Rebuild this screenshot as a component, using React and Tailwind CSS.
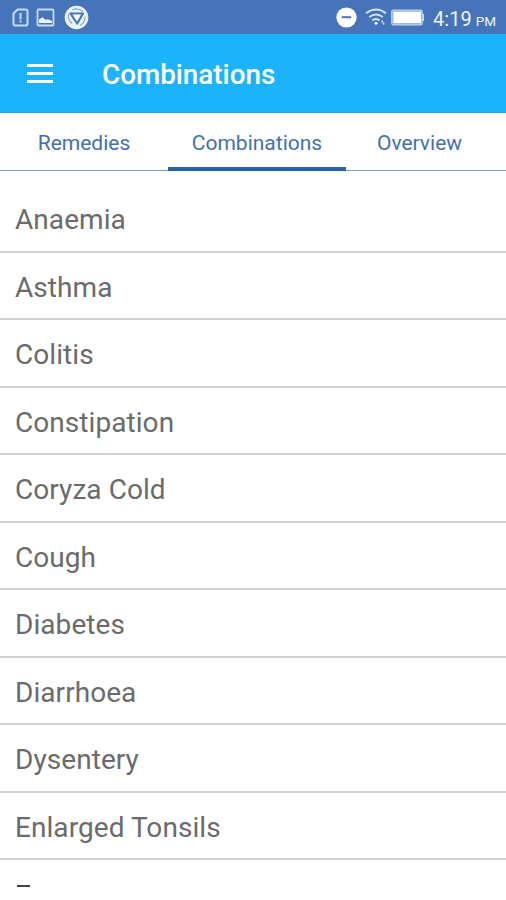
const conditions = [
  "Anaemia",
  "Asthma",
  "Colitis",
  "Constipation",
  "Coryza Cold",
  "Cough",
  "Diabetes",
  "Diarrhoea",
  "Dysentery",
  "Enlarged Tonsils",
];

function StatusBar() {
  return (
    <div className="flex h-[34px] items-center bg-[#4674ba] pl-3 pr-[10px] text-[#edf6fd]">
      <svg width="17" height="19" viewBox="0 0 17 19" fill="none" stroke="#c3dcf0" strokeWidth="2">
        <path d="M5.5 1.5h8.2q1.8 0 1.8 1.8v12.4q0 1.8-1.8 1.8H3.3q-1.8 0-1.8-1.8V5.5z" />
        <path d="M8.5 5v6.5M8.5 12.4v2" />
      </svg>
      <svg className="ml-[7px]" width="19" height="19" viewBox="0 0 19 19" fill="none">
        <rect x="1.5" y="1.5" width="16" height="16" rx="1" stroke="#c3dcf0" strokeWidth="1.8" />
        <path d="M3 15v-3.500l3.500-2.200 3 2.500 2.500-.6 4 1.800v2z" fill="#edf6fd" />
      </svg>
      <svg className="ml-[9px]" width="25" height="25" viewBox="0 0 25 25" fill="none">
        <circle cx="12.5" cy="12.5" r="11.8" fill="#e9f3fb" />
        <path d="M4.5 9.2Q3.500 14.500 8 18.500M21 11.500Q21.500 17 16 20.500M8 4.800Q14 2.500 19 6.500" stroke="#86a8d6" strokeWidth="1.2" />
        <path d="M6.5 8.500h12.500l-5.800 10z" fill="#f4f9fd" stroke="#4674ba" strokeWidth="2.2" strokeLinejoin="round" />
        <path d="M10.5 10.500h4.600l-2.200 4z" fill="#fff" stroke="#fff" strokeWidth="1.5" />
      </svg>
      <div className="ml-auto flex items-center">
        <svg width="21" height="21" viewBox="0 0 21 21">
          <circle cx="10.5" cy="10.5" r="10.1" fill="#fff" />
          <path d="M5.8 10.2h9.4" stroke="#4674ba" strokeWidth="2" />
        </svg>
        <svg className="ml-[8px]" width="23" height="18" viewBox="0 0 23 18" fill="none" stroke="#cfe4f5" strokeWidth="2">
          <path d="M1 5.2Q11 -2 21 5.2M4.2 9Q11 4.1 17.8 9M7.3 12.4Q11 9.8 14.5 12.4" />
          <circle cx="11" cy="15.2" r="1.5" fill="#edf6fd" stroke="none" />
          <path d="M17.2 12.5v1.7M18.5 14.5v2" strokeWidth="1.7" />
        </svg>
        <svg className="ml-[3px]" width="34" height="17" viewBox="0 0 34 17">
          <rect x=".8" y="1" width="30.4" height="14.8" rx="1.6" fill="#86a8d6" stroke="#c3dcf0" strokeWidth="1.2" />
          <rect x="2.4" y="2.6" width="27.6" height="11.6" fill="#fff" />
          <path d="M32.2 5v7" stroke="#c3dcf0" strokeWidth="1.6" />
        </svg>
        <span className="ml-[8px] mt-[5px] flex items-baseline whitespace-nowrap leading-6">
          <span className="text-[20px]">4:19</span>
          <span className="ml-[4px] text-[13.5px]">PM</span>
        </span>
      </div>
    </div>
  );
}

export default function App() {
  return (
    <div className="flex h-[900px] w-[506px] flex-col overflow-hidden bg-white font-['Roboto',sans-serif]">
      <StatusBar />
      <header className="flex h-[79px] items-center border-b border-[#2e9ddd] bg-[#1bb4fc] text-white">
        <button aria-label="Menu" className="ml-[27px] flex w-[26px] flex-col gap-[5px]">
          <span className="h-[3px] w-full bg-white" />
          <span className="h-[3px] w-full bg-white" />
          <span className="h-[3px] w-full bg-white" />
        </button>
        <h1 className="ml-[49px] mt-[3px] text-[27.8px] font-medium leading-8">Combinations</h1>
      </header>
      <nav className="flex h-[58px] shrink-0 border-b-[1.5px] border-[#7f9dc8] text-[21px] text-[#4570ad]">
        <div className="flex w-[168px] justify-center pt-[14px] leading-8">Remedies</div>
        <div className="-mb-px flex w-[178px] justify-center border-b-[4px] border-[#2860a6] pt-[14px] leading-8">
          Combinations
        </div>
        <div className="flex w-[147px] justify-center pt-[14px] leading-8">Overview</div>
      </nav>
      <ul className="mt-[14px] text-[28px] tracking-[0.06px] text-[#6b6b6b]">
        {conditions.map((name) => (
          <li key={name} className="flex h-[67.5px] items-center border-b-2 border-[#d2d2d2] pl-[15px] pt-[5px]">
            {name}
          </li>
        ))}
      </ul>
      <div className="ml-[17px] mt-[25px] h-[2px] w-[13px] shrink-0 bg-[#444]" />
    </div>
  );
}
